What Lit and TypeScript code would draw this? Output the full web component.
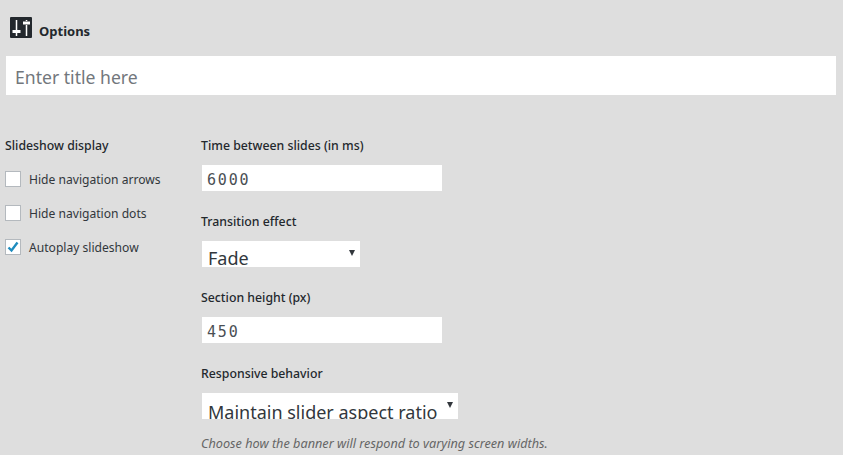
import {LitElement, html, css} from 'lit';
import {customElement, state} from 'lit/decorators.js';
import {map} from 'lit/directives/map.js';

@customElement('app-root')
export class AppRoot extends LitElement {

  @state()
  checks = [
    {label: 'Hide navigation arrows', on: false},
    {label: 'Hide navigation dots', on: false},
    {label: 'Autoplay slideshow', on: true},
  ];

  static override styles = css`
    :host {
      display: block;
      height: 455px;
      overflow: hidden;
      background: #dedede;
      color: #23282d;
      font-family: "Noto Sans", "Open Sans", sans-serif;
      font-size: 12.3px;
      line-height: 20px;
    }

    .header {
      display: flex;
      align-items: center;
      gap: 7px;
      height: 21px;
      padding: 17px 0 0 10px;
    }

    .header svg {
      display: block;
      width: 22px;
      height: 21px;
    }

    .header h2 {
      margin: 7px 0 0;
      font-size: 13px;
      font-weight: 700;
    }

    .title {
      display: block;
      box-sizing: border-box;
      width: 830px;
      height: 39px;
      margin: 18px 0 0 6px;
      padding: 2px 9px 0;
      border: 0;
      background: #fff;
      font-family: inherit;
      font-size: 17.6px;
    }

    .title::placeholder {
      color: #72777c;
      opacity: 1;
    }

    .columns {
      display: flex;
      padding: 41px 0 0 5px;
    }

    .side {
      width: 196px;
      flex: none;
    }

    .heading {
      font-weight: 500;
    }

    .check {
      display: flex;
      align-items: center;
      gap: 8px;
      height: 16px;
      margin-top: 18px;
      color: #32373c;
      font-size: 12.1px;
    }

    .check span:last-child {
      margin-top: 1px;
    }

    .side .heading + .check {
      margin-top: 15px;
    }

    .box {
      box-sizing: border-box;
      flex: none;
      width: 16px;
      height: 16px;
      border: 1px solid #b4b9be;
      background: #fff;
    }

    .box svg {
      display: block;
      width: 14px;
      height: 14px;
    }

    .field {
      margin-bottom: 21px;
    }

    .field input,
    .pick {
      display: block;
      box-sizing: border-box;
      height: 26px;
      margin: 9px 0 0 1px;
      background: #fff;
    }

    .field input {
      width: 240px;
      padding: 3px 4px 0 5px;
      border: 0;
      color: #4a4f54;
      font-family: "DejaVu Sans Mono", monospace;
      font-size: 15px;
      letter-spacing: 1.8px;
    }

    .pick {
      position: relative;
      overflow: hidden;
    }

    .pick select {
      display: block;
      width: 100%;
      height: 26px;
      padding: 5px 0 0 6px;
      border: 0;
      border-radius: 0;
      background: transparent;
      appearance: none;
      color: #32373c;
      font-family: inherit;
      font-size: 18px;
    }

    .pick.low select {
      padding-top: 7px;
    }

    .pick::after {
      content: '';
      position: absolute;
      top: 9px;
      right: 5px;
      border: 3.500px solid transparent;
      border-top: 6px solid #32373c;
      border-bottom: 0;
    }

    .hint {
      margin: -7px 0 0;
      color: #666;
      font-size: 12.7px;
      font-style: italic;
    }
  `;

  override render() {
    return html`
      <div class="header">
        <svg viewBox="0 0 22 21">
          <rect width="22" height="21" rx="1" fill="#23282d"/>
          <path d="M6.500 3v10M6.500 16v3M16.500 3v1M16.500 8v11" fill="none" stroke="#fff" stroke-width="1.500"/>
          <path d="M2.500 14.500h8M13 6h7" fill="none" stroke="#fff" stroke-width="3"/>
        </svg>
        <h2>Options</h2>
      </div>
      <input class="title" placeholder="Enter title here">
      <div class="columns">
        <div class="side">
          <div class="heading">Slideshow display</div>
          ${map(this.checks, (c) => html`
            <div class="check">
              <span class="box">
                ${c.on ? html`<svg viewBox="0 0 14 14"><path d="M2.500 7.500l3 3 6-8" fill="none" stroke="#1e8cbe" stroke-width="2.400"/></svg>` : ''}
              </span>
              <span>${c.label}</span>
            </div>
          `)}
        </div>
        <div class="main">
          <div class="field">
            <div class="heading">Time between slides (in ms)</div>
            <input value="6000">
          </div>
          <div class="field">
            <div class="heading">Transition effect</div>
            <div class="pick" style="width: 158px"><select><option>Fade</option></select></div>
          </div>
          <div class="field">
            <div class="heading">Section height (px)</div>
            <input value="450">
          </div>
          <div class="field">
            <div class="heading">Responsive behavior</div>
            <div class="pick low" style="width: 256px"><select><option>Maintain slider aspect ratio</option></select></div>
          </div>
          <p class="hint">Choose how the banner will respond to varying screen widths.</p>
        </div>
      </div>
    `;
  }
}

declare global {
  interface HTMLElementTagNameMap {
    'app-root': AppRoot;
  }
}
